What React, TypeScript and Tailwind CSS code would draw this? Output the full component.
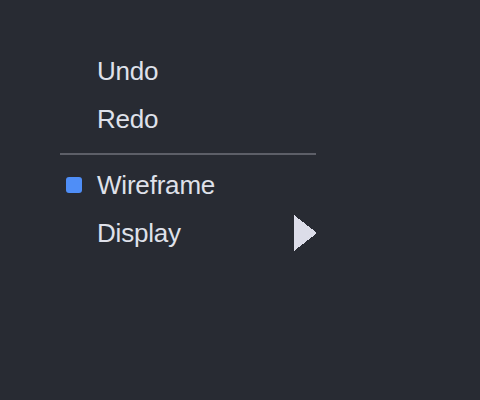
import React from "react";

export default function App() {
  return (
    <div className="w-[480px] h-[400px] bg-[#282b33] overflow-hidden" style={{ fontFamily: '"Liberation Sans", Arial, sans-serif' }}>
      <div className="ml-[60px] pt-[47px] w-[257px] text-[26px] tracking-[-0.2px] text-[#dfe1ea]">
        <div className="h-12 flex items-center pl-[37px]">Undo</div>
        <div className="h-12 flex items-center pl-[37px]">Redo</div>
        <div className="pt-[10px] pb-[6px]">
          <div className="h-[2px] w-[256px] bg-[#5d5f68]" />
        </div>
        <div className="h-12 flex items-center">
          <div className="w-[16px] h-[16px] ml-[6px] mr-[15px] rounded-[3px] bg-[#4f8ef7]" />
          <span>Wireframe</span>
        </div>
        <div className="h-12 flex items-center justify-between pl-[37px]">
          <span>Display</span>
          <svg width="23" height="36" viewBox="0 0 23 36" shapeRendering="crispEdges">
            <polygon points="0,0 23,18 0,36" fill="#dcdde9" />
          </svg>
        </div>
      </div>
    </div>
  );
}
